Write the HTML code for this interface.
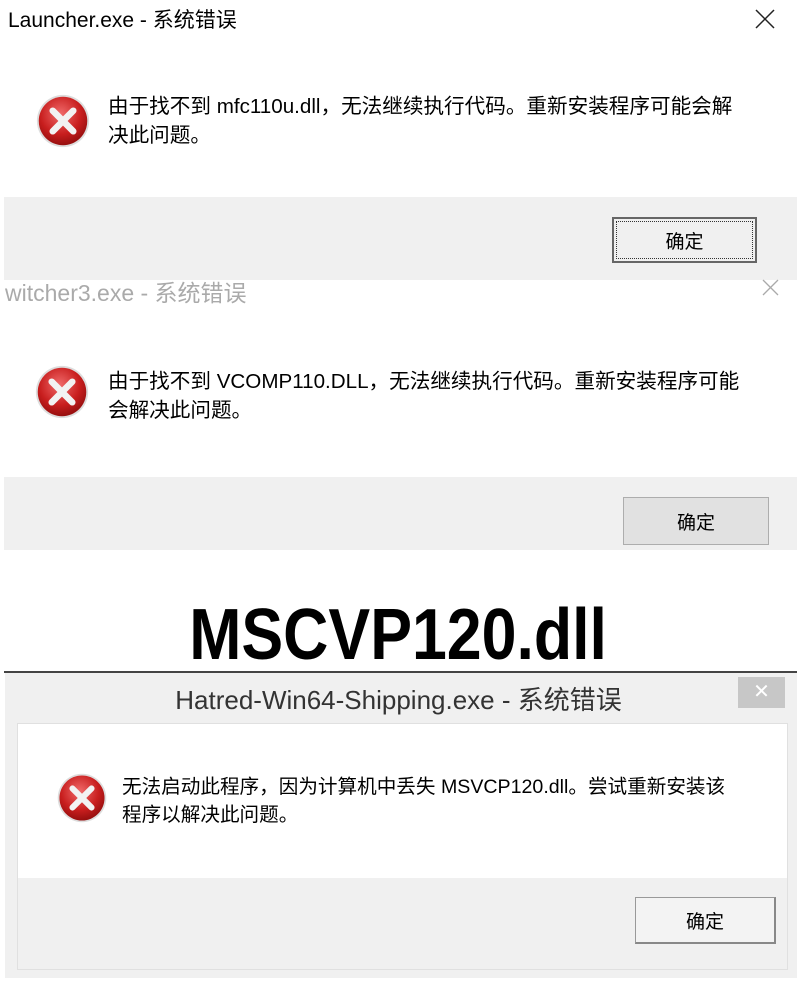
<!DOCTYPE html>
<html><head><meta charset="utf-8"><style>
*{margin:0;padding:0;box-sizing:border-box}
body{width:797px;height:984px;background:#fff;position:relative;overflow:hidden;font-family:"Liberation Sans","Noto Sans CJK SC",sans-serif;color:#000}
.a{position:absolute}
.t{font-size:20.6px;line-height:29px;white-space:nowrap}
.btn{position:absolute;background:#e1e1e1;border:1px solid #adadad;font-size:19px;display:flex;align-items:center;justify-content:center}
</style></head><body>
<svg width="0" height="0" style="position:absolute"><defs>
<radialGradient id="g" cx="45%" cy="35%" r="70%"><stop offset="0" stop-color="#f06a6a"/><stop offset=".6" stop-color="#c81e1e"/><stop offset="1" stop-color="#8c0c0c"/></radialGradient>
<symbol id="ic" viewBox="0 0 60 60"><circle cx="30" cy="30" r="28" fill="#ddd"/><circle cx="30" cy="30" r="26" fill="url(#g)"/><path d="M19 19L41 41M41 19L19 41" stroke="#f2f2f2" stroke-width="7" stroke-linecap="round"/></symbol>
</defs></svg>

<!-- dialog 1 -->
<div class="a" style="left:8px;top:4px;font-size:21px">Launcher.exe - 系统错误</div>
<svg class="a" style="left:755px;top:9px" width="20" height="20"><path d="M1 1L19 19M19 1L1 19" stroke="#222" stroke-width="1.5"/></svg>
<svg class="a" style="left:35px;top:93px" width="56" height="56"><use href="#ic"/></svg>
<div class="a t" style="left:108px;top:92px">由于找不到 mfc110u.dll，无法继续执行代码。重新安装程序可能会解<br>决此问题。</div>
<div class="a" style="left:4px;top:197px;width:793px;height:83px;background:#f0f0f0"></div>
<div class="btn" style="left:612px;top:217px;width:145px;height:46px;background:#f0f0f0;border:2px solid #666;outline:1px dotted #333;outline-offset:-5px">确定</div>

<!-- dialog 2 -->
<div class="a" style="left:5px;top:274px;font-size:23px;color:#aaa">witcher3.exe - 系统错误</div>
<svg class="a" style="left:762px;top:279px" width="17" height="17"><path d="M1 1L16 16M16 1L1 16" stroke="#aaa" stroke-width="1.3"/></svg>
<svg class="a" style="left:34px;top:364px" width="56" height="56"><use href="#ic"/></svg>
<div class="a t" style="left:108px;top:367px">由于找不到 VCOMP110.DLL，无法继续执行代码。重新安装程序可能<br>会解决此问题。</div>
<div class="a" style="left:4px;top:477px;width:793px;height:73px;background:#f0f0f0"></div>
<div class="btn" style="left:623px;top:497px;width:146px;height:48px">确定</div>

<!-- big label -->
<div class="a" style="left:0;top:590px;width:797px;text-align:center;font-size:72px;font-weight:bold;line-height:90px"><span style="display:inline-block;transform:scaleX(.87)">MSCVP120.dll</span></div>

<!-- dialog 3 -->
<div class="a" style="left:4px;top:671px;width:793px;height:2px;background:#444"></div>
<div class="a" style="left:5px;top:673px;width:792px;height:305px;background:#f0f0f0"></div>
<div class="a" style="left:0;top:680px;width:797px;text-align:center;font-size:26px;color:#333">Hatred-Win64-Shipping.exe - 系统错误</div>
<div class="a" style="left:738px;top:677px;width:47px;height:31px;background:#c7c7c7;color:#fff;font-size:20px;text-align:center;line-height:31px">✕</div>
<div class="a" style="left:17px;top:723px;width:771px;height:155px;background:#fff;border:1px solid #e0e0e0;border-bottom:none"></div>
<div class="a" style="left:17px;top:878px;width:771px;height:92px;background:#f0f0f0;border:1px solid #e0e0e0;border-top:none"></div>
<svg class="a" style="left:56px;top:772px" width="52" height="52"><use href="#ic"/></svg>
<div class="a t" style="left:122px;top:773px;font-size:19.6px;line-height:28px">无法启动此程序，因为计算机中丢失 MSVCP120.dll。尝试重新安装该<br>程序以解决此问题。</div>
<div class="btn" style="left:635px;top:897px;width:141px;height:47px;background:#f3f3f3;border:1px solid #999;border-right:2px solid #888;border-bottom:2px solid #888">确定</div>
</body></html>
